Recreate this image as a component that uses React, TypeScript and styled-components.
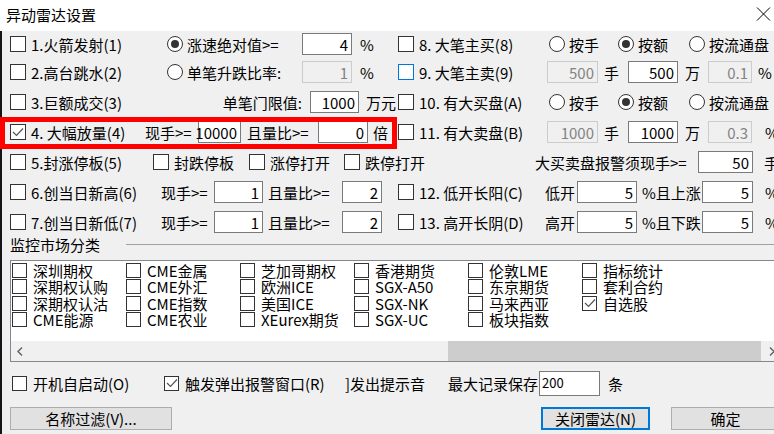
import React from 'react';
import styled, { createGlobalStyle } from 'styled-components';

const GlobalStyle = createGlobalStyle`
  html, body {
    margin: 0;
    padding: 0;
    background: #f0f0f0;
    overflow: hidden;
  }
  body {
    font-family: "Noto Sans CJK SC", "Noto Sans", sans-serif;
    font-size: 15px;
    line-height: 1;
    color: #000;
  }
`;

const Dialog = styled.div`
  position: relative;
  width: 774px;
  height: 434px;
  overflow: hidden;
  background: #f0f0f0;
`;

const TitleBar = styled.div`
  height: 31px;
  box-sizing: border-box;
  background: #fff;
  display: flex;
  align-items: center;
  justify-content: space-between;
  padding: 0 2px 3px 6px;
`;

const Title = styled.span`
  font-size: 15px;
`;

const Body = styled.div`
  width: 790px;
  height: 403px;
  box-sizing: border-box;
  border-left: 2px solid #151515;
  padding-left: 8px;
`;

const Rows = styled.div`
  display: grid;
  grid-template-rows: 26px repeat(6, 30px);
`;

const Row = styled.div`
  display: flex;
  align-items: center;
  white-space: nowrap;
`;

const Half = styled.div<{ $w?: number }>`
  flex: none;
  display: flex;
  align-items: center;
  width: ${(p) => (p.$w ? `${p.$w}px` : 'auto')};
`;

const Slot = styled.div<{ $w?: number; $pl?: number; $pr?: number; $right?: boolean }>`
  flex: none;
  box-sizing: border-box;
  display: flex;
  align-items: center;
  width: ${(p) => (p.$w ? `${p.$w}px` : 'auto')};
  padding-left: ${(p) => p.$pl ?? 0}px;
  padding-right: ${(p) => p.$pr ?? 0}px;
  justify-content: ${(p) => (p.$right ? 'flex-end' : 'flex-start')};
`;

const Unit = styled.span<{ $ml?: number }>`
  flex: none;
  margin-left: ${(p) => p.$ml ?? 0}px;
`;

const Box = styled.span<{ $focus?: boolean; $size?: number }>`
  flex: none;
  box-sizing: border-box;
  width: ${(p) => p.$size ?? 16}px;
  height: ${(p) => p.$size ?? 16}px;
  border: 1px solid ${(p) => (p.$focus ? '#0078d7' : '#333')};
  background: #fff;
  display: flex;
  align-items: center;
  justify-content: center;
`;

const CheckLabel = styled.span<{ $gap?: number }>`
  margin-left: ${(p) => p.$gap ?? 5}px;
`;

const RadioCircle = styled.span`
  flex: none;
  box-sizing: border-box;
  width: 16px;
  height: 16px;
  border-radius: 50%;
  border: 1px solid #333;
  background: #fff;
  display: flex;
  align-items: center;
  justify-content: center;
`;

const RadioDot = styled.span`
  width: 8px;
  height: 8px;
  border-radius: 50%;
  background: #333;
`;

const Field = styled.div<{ $w: number; $disabled?: boolean; $h?: number }>`
  flex: none;
  box-sizing: border-box;
  width: ${(p) => p.$w}px;
  height: ${(p) => p.$h ?? 22}px;
  border: 1px solid ${(p) => (p.$disabled ? '#cccccc' : '#7a7a7a')};
  background: ${(p) => (p.$disabled ? '#f0f0f0' : '#fff')};
  color: ${(p) => (p.$disabled ? '#838383' : '#000')};
  display: flex;
  align-items: center;
  justify-content: flex-end;
  padding: 0 3px;
  font-size: 15px;
`;

const TopLeftField = styled(Field)`
  justify-content: flex-start;
  align-items: flex-start;
  padding: 4px 2px;
  font-size: 13px;
`;

const GroupHeader = styled.div`
  height: 14px;
  display: flex;
  align-items: center;
`;

const GroupLine = styled.div`
  flex: 1;
  height: 1px;
  margin-left: 26px;
  background: #a0a0a0;
`;

const ListBox = styled.div`
  margin-top: 9px;
  width: 771px;
  height: 102px;
  box-sizing: border-box;
  border: 1px solid #828790;
  background: #fff;
  display: flex;
  flex-direction: column;
`;

const ListGrid = styled.div`
  flex: 1;
  display: grid;
  grid-template-columns: repeat(6, 114px);
  grid-template-rows: repeat(4, 16.5px);
  grid-auto-flow: column;
  padding: 1px 0 0 1px;
  align-content: start;
`;

const ListItem = styled.div`
  display: flex;
  align-items: center;
  white-space: nowrap;
`;

const ScrollBar = styled.div`
  flex: none;
  height: 20px;
  display: flex;
  background: #f0f0f0;
`;

const ScrollArrow = styled.div`
  flex: none;
  width: 17px;
  display: flex;
  align-items: center;
  justify-content: center;
`;

const Track = styled.div`
  flex: 1;
  display: flex;
`;

const Thumb = styled.div<{ $offset: number; $size: number }>`
  margin-left: ${(p) => p.$offset}px;
  width: ${(p) => p.$size}px;
  background: #cdcdcd;
`;

const OptionsRow = styled.div`
  margin-top: 8px;
  height: 26px;
  padding-left: 2px;
  display: flex;
  align-items: center;
  white-space: nowrap;
`;

const ButtonRow = styled.div`
  margin-top: 11px;
  display: flex;
`;

const Button = styled.div<{ $w: number; $ml?: number; $focus?: boolean }>`
  flex: none;
  box-sizing: border-box;
  width: ${(p) => p.$w}px;
  height: 23px;
  margin-left: ${(p) => p.$ml ?? 0}px;
  background: #e1e1e1;
  border: ${(p) => (p.$focus ? '2px solid #0078d7' : '1px solid #adadad')};
  display: flex;
  align-items: center;
  justify-content: center;
`;

const Highlight = styled.div`
  position: absolute;
  left: 0;
  top: 117px;
  width: 397px;
  height: 32px;
  box-sizing: border-box;
  border: 5px solid #ff0000;
  pointer-events: none;
`;

const Tick = () => (
  <svg width="12" height="10" viewBox="0 0 12 10">
    <polyline points="1,5 4.5,8.5 11,1.5" fill="none" stroke="#555" strokeWidth="1.2" />
  </svg>
);

const Check = ({
  label,
  checked,
  focus,
  size,
  gap,
}: {
  label?: string;
  checked?: boolean;
  focus?: boolean;
  size?: number;
  gap?: number;
}) => (
  <>
    <Box $focus={focus} $size={size}>
      {checked && <Tick />}
    </Box>
    {label && <CheckLabel $gap={gap}>{label}</CheckLabel>}
  </>
);

const Radio = ({ label, on }: { label: string; on?: boolean }) => (
  <>
    <RadioCircle>{on && <RadioDot />}</RadioCircle>
    <CheckLabel $gap={4}>{label}</CheckLabel>
  </>
);

const Chevron = ({ dir }: { dir: 'left' | 'right' }) => (
  <svg width="6" height="9" viewBox="0 0 6 9">
    <polyline
      points={dir === 'left' ? '5,0.5 1,4.5 5,8.5' : '1,0.5 5,4.5 1,8.5'}
      fill="none"
      stroke="#606060"
      strokeWidth="1.4"
    />
  </svg>
);

const CloseIcon = () => (
  <svg width="16" height="14" viewBox="0 0 16 14">
    <path d="M1 0.5 L14 13.5 M14 0.5 L1 13.5" stroke="#000" strokeWidth="1" />
  </svg>
);

const markets = [
  '深圳期权', '深期权认购', '深期权认沽', 'CME能源',
  'CME金属', 'CME外汇', 'CME指数', 'CME农业',
  '芝加哥期权', '欧洲ICE', '美国ICE', 'XEurex期货',
  '香港期货', 'SGX-A50', 'SGX-NK', 'SGX-UC',
  '伦敦LME', '东京期货', '马来西亚', '板块指数',
  '指标统计', '套利合约', '自选股',
];

const checkedMarkets = ['自选股'];

const RadioSet = ({ label, focus }: { label: string; focus?: boolean }) => (
  <Half>
    <Slot $w={151}>
      <Check label={label} focus={focus} />
    </Slot>
    <Slot $w={69}>
      <Radio label="按手" />
    </Slot>
    <Slot $w={71}>
      <Radio label="按额" on />
    </Slot>
    <Slot>
      <Radio label="按流通盘" />
    </Slot>
  </Half>
);

const AmountSet = ({
  label,
  hands,
  amount,
  ratio,
  focus,
  pctGap,
}: {
  label: string;
  hands: string;
  amount: string;
  ratio: string;
  focus?: boolean;
  pctGap: number;
}) => (
  <Half>
    <Slot $w={149}>
      <Check label={label} focus={focus} />
    </Slot>
    <Field $w={51} $disabled>
      {hands}
    </Field>
    <Slot $w={30} $pl={6}>
      手
    </Slot>
    <Field $w={50}>{amount}</Field>
    <Slot $w={30} $pl={7}>
      万
    </Slot>
    <Field $w={44} $disabled>
      {ratio}
    </Field>
    <Unit $ml={pctGap}>%</Unit>
  </Half>
);

const GapSet = ({ label, open, rest }: { label: string; open: string; rest: string }) => (
  <Half>
    <Slot $w={147}>
      <Check label={label} />
    </Slot>
    <Slot $w={32}>{open}</Slot>
    <Field $w={60}>5</Field>
    <Slot $w={65} $pl={5}>
      {rest}
    </Slot>
    <Field $w={51}>5</Field>
    <Unit $ml={12}>%</Unit>
  </Half>
);

const NewExtreme = ({ label }: { label: string }) => (
  <Half $w={388}>
    <Slot $w={151}>
      <Check label={label} />
    </Slot>
    <Slot $w={53}>现手&gt;=</Slot>
    <Field $w={49}>1</Field>
    <Slot $w={79} $pl={5}>
      且量比&gt;=
    </Slot>
    <Field $w={40}>2</Field>
  </Half>
);

export default function App() {
  return (
    <>
      <GlobalStyle />
      <Dialog>
        <TitleBar>
          <Title>异动雷达设置</Title>
          <CloseIcon />
        </TitleBar>
        <Body>
          <Rows>
            <Row>
              <Half $w={388}>
                <Slot $w={157}>
                  <Check label="1.火箭发射(1)" />
                </Slot>
                <Slot $w={135}>
                  <Radio label="涨速绝对值>=" on />
                </Slot>
                <Field $w={50}>4</Field>
                <Unit $ml={8}>%</Unit>
              </Half>
              <RadioSet label="8. 大笔主买(8)" />
            </Row>
            <Row>
              <Half $w={388}>
                <Slot $w={157}>
                  <Check label="2.高台跳水(2)" />
                </Slot>
                <Slot $w={135}>
                  <Radio label="单笔升跌比率:" />
                </Slot>
                <Field $w={50} $disabled>
                  1
                </Field>
                <Unit $ml={8}>%</Unit>
              </Half>
              <AmountSet label="9. 大笔主卖(9)" hands="500" amount="500" ratio="0.1" focus pctGap={6} />
            </Row>
            <Row>
              <Half $w={388}>
                <Slot $w={157}>
                  <Check label="3.巨额成交(3)" />
                </Slot>
                <Slot $w={143} $pr={8} $right>
                  单笔门限值:
                </Slot>
                <Field $w={49}>1000</Field>
                <Unit $ml={7}>万元</Unit>
              </Half>
              <RadioSet label="10. 有大买盘(A)" />
            </Row>
            <Row>
              <Half $w={388}>
                <Slot $w={135}>
                  <Check label="4. 大幅放量(4)" checked />
                </Slot>
                <Slot $w={53}>现手&gt;=</Slot>
                <Field $w={43}>10000</Field>
                <Slot $w={77} $pl={6}>
                  且量比&gt;=
                </Slot>
                <Field $w={50}>0</Field>
                <Unit $ml={5}>倍</Unit>
              </Half>
              <AmountSet label="11. 有大卖盘(B)" hands="1000" amount="1000" ratio="0.3" pctGap={13} />
            </Row>
            <Row>
              <Slot $w={143}>
                <Check label="5.封涨停板(5)" />
              </Slot>
              <Slot $w={96}>
                <Check label="封跌停板" />
              </Slot>
              <Slot $w={95}>
                <Check label="涨停打开" />
              </Slot>
              <Slot $w={191}>
                <Check label="跌停打开" />
              </Slot>
              <Slot $w={163}>大买卖盘报警须现手&gt;=</Slot>
              <Field $w={55}>50</Field>
              <Unit $ml={11}>手</Unit>
            </Row>
            <Row>
              <NewExtreme label="6.创当日新高(6)" />
              <GapSet label="12. 低开长阳(C)" open="低开" rest="%且上涨" />
            </Row>
            <Row>
              <NewExtreme label="7.创当日新低(7)" />
              <GapSet label="13. 高开长阴(D)" open="高开" rest="%且下跌" />
            </Row>
          </Rows>

          <GroupHeader>
            <span>监控市场分类</span>
            <GroupLine />
          </GroupHeader>

          <ListBox>
            <ListGrid>
              {markets.map((m) => (
                <ListItem key={m}>
                  <Check label={m} size={15} gap={6} checked={checkedMarkets.includes(m)} />
                </ListItem>
              ))}
            </ListGrid>
            <ScrollBar>
              <ScrollArrow>
                <Chevron dir="left" />
              </ScrollArrow>
              <Track>
                <Thumb $offset={420} $size={313} />
              </Track>
              <ScrollArrow>
                <Chevron dir="right" />
              </ScrollArrow>
            </ScrollBar>
          </ListBox>

          <OptionsRow>
            <Slot $w={152}>
              <Check label="开机自启动(O)" size={15} gap={6} />
            </Slot>
            <Slot $w={181}>
              <Check label="触发弹出报警窗口(R)" checked size={15} gap={6} />
            </Slot>
            <Slot $w={103}>]发出提示音</Slot>
            <Slot $w={91}>最大记录保存</Slot>
            <TopLeftField $w={61} $h={25}>
              200
            </TopLeftField>
            <Unit $ml={8}>条</Unit>
          </OptionsRow>

          <ButtonRow>
            <Button $w={162}>名称过滤(V)...</Button>
            <Button $w={109} $ml={369} $focus>
              关闭雷达(N)
            </Button>
            <Button $w={109} $ml={21}>
              确定
            </Button>
          </ButtonRow>
        </Body>
        <Highlight />
      </Dialog>
    </>
  );
}
